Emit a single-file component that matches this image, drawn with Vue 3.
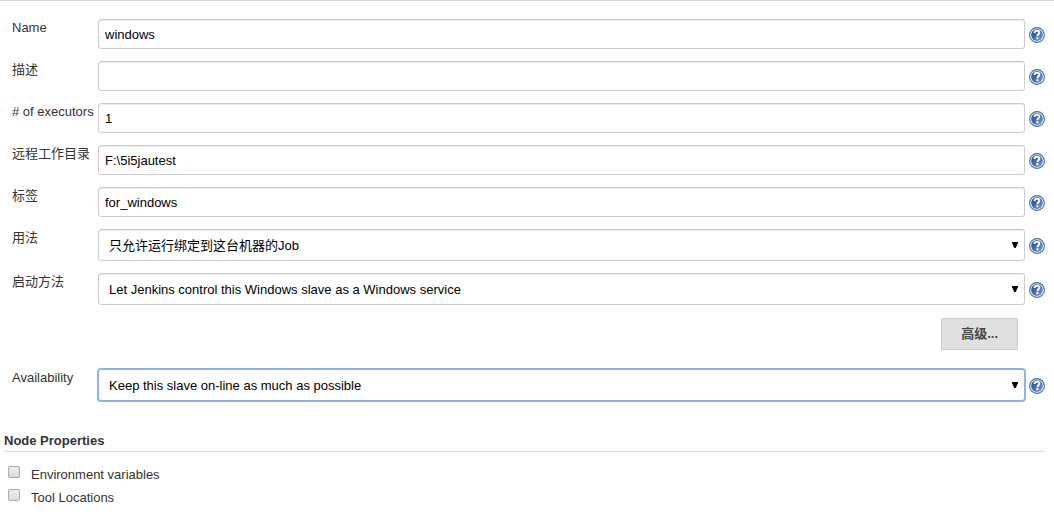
<script setup>
import { ref } from 'vue'

const fields = ref([
  { id: 'name', label: 'Name', type: 'text', value: 'windows' },
  { id: 'description', label: '描述', type: 'text', value: '' },
  { id: 'executors', label: '# of executors', type: 'text', value: '1' },
  { id: 'remote-fs', label: '远程工作目录', type: 'text', value: 'F:\\5i5jautest' },
  { id: 'labels', label: '标签', type: 'text', value: 'for_windows' },
  { id: 'usage', label: '用法', type: 'select', value: '只允许运行绑定到这台机器的Job' },
  { id: 'launcher', label: '启动方法', type: 'select', value: 'Let Jenkins control this Windows slave as a Windows service', advanced: true },
  { id: 'availability', label: 'Availability', type: 'select', value: 'Keep this slave on-line as much as possible', active: true },
])

const properties = ref([
  { id: 'env', label: 'Environment variables', checked: false },
  { id: 'tools', label: 'Tool Locations', checked: false },
])
</script>

<template>
  <form class="config" @submit.prevent>
    <div class="fields">
      <template v-for="field in fields" :key="field.id">
        <div class="row">
          <label class="label" :for="field.id">{{ field.label }}</label>
          <input v-if="field.type === 'text'" :id="field.id" v-model="field.value" class="control" type="text" />
          <div v-else class="select-wrap">
            <select :id="field.id" v-model="field.value" class="control select" :class="{ active: field.active }">
              <option>{{ field.value }}</option>
            </select>
            <svg class="arrow" width="6" height="6" viewBox="0 0 6 6" aria-hidden="true">
              <path d="M0 0h6v1L3.7 6H2.3L0 1z" fill="#000" />
            </svg>
          </div>
          <button class="help" type="button" :aria-label="'Help: ' + field.label">
            <svg width="16" height="16" viewBox="0 0 16 16" aria-hidden="true">
              <defs>
                <linearGradient :id="field.id + '-disc'" x1="0" y1="0" x2="1" y2="1">
                  <stop offset="0" stop-color="#204a87" />
                  <stop offset="0.45" stop-color="#3e6ba6" />
                  <stop offset="1" stop-color="#7da5d3" />
                </linearGradient>
              </defs>
              <circle cx="8" cy="8" r="7.4" fill="#fff" stroke="#4069a0" stroke-width="1.1" />
              <circle cx="8" cy="8" r="5.9" :fill="'url(#' + field.id + '-disc)'" />
              <path d="M5.6 6V5.4C5.8 4.2 6.8 3.7 8 3.7c1.5 0 2.4.7 2.4 1.9 0 1.6-2 1.8-2 3.6" fill="none" stroke="#fff" stroke-width="1.9" />
              <path d="M7.4 10.2h2v2h-2z" fill="#fff" />
            </svg>
          </button>
        </div>
        <div v-if="field.advanced" class="actions">
          <button class="advanced" type="button">高级...</button>
        </div>
      </template>
    </div>

    <section class="properties">
      <h2 class="heading">Node Properties</h2>
      <div v-for="item in properties" :key="item.id" class="property">
        <input :id="item.id" v-model="item.checked" class="check" type="checkbox" />
        <label :for="item.id">{{ item.label }}</label>
      </div>
    </section>
  </form>
</template>

<style>
body {
  margin: 0;
  background: #fff;
}
</style>

<style scoped>
.config {
  border-top: 1px solid #d3d7cf;
  padding: 18px 9px 0 4px;
  color: #333;
  font: 13px/16px "Liberation Sans", Arial, "Noto Sans CJK SC", sans-serif;
}
.config * {
  box-sizing: border-box;
}
.fields {
  display: flex;
  flex-direction: column;
  gap: 12px;
}
.row {
  display: grid;
  grid-template-columns: 82px minmax(0, 1fr) 16px;
  column-gap: 4px;
  align-items: center;
  padding-left: 8px;
}
.label {
  align-self: start;
  padding-top: 1px;
  white-space: nowrap;
}
.control {
  display: block;
  width: 100%;
  height: 30px;
  margin: 0;
  padding: 0 6px;
  border: 1px solid #ccc;
  border-radius: 3px;
  background: #fff;
  box-shadow: inset 0 1px 1px rgba(0, 0, 0, 0.075);
  color: #000;
  font: inherit;
  outline: none;
}
.select-wrap {
  position: relative;
}
.select {
  height: 32px;
  padding: 2px 24px 0 10px;
  appearance: none;
}
.select.active {
  border-color: #8db2ee;
  box-shadow: 0 0 0 1px #8db2ee;
}
.arrow {
  position: absolute;
  top: 13px;
  right: 7px;
  pointer-events: none;
}
.help {
  width: 16px;
  height: 16px;
  margin-top: 2px;
  padding: 0;
  border: 0;
  background: none;
  cursor: pointer;
}
.help svg {
  display: block;
}
.actions {
  display: flex;
  justify-content: flex-end;
  padding: 1px 27px 7px 0;
}
.advanced {
  height: 32px;
  padding: 0 19px;
  border: 1px solid #ccc;
  border-radius: 1px;
  background: #e0e0e0;
  color: #444;
  font: inherit;
  font-weight: bold;
}
.properties {
  margin-top: 32px;
}
.heading {
  margin: 0 0 11px;
  padding-bottom: 2px;
  border-bottom: 1px solid #ddd;
  font-size: 13px;
  line-height: 16px;
}
.property {
  display: flex;
  align-items: center;
  gap: 11px;
  height: 23px;
  padding-left: 4px;
}
.check {
  appearance: none;
  width: 12px;
  height: 12px;
  margin: 0 0 5px;
  border: 1px solid #aaa;
  border-radius: 2px;
  background: linear-gradient(#ededed, #dcdcdc);
}
.check:checked {
  background: #555;
}
</style>
